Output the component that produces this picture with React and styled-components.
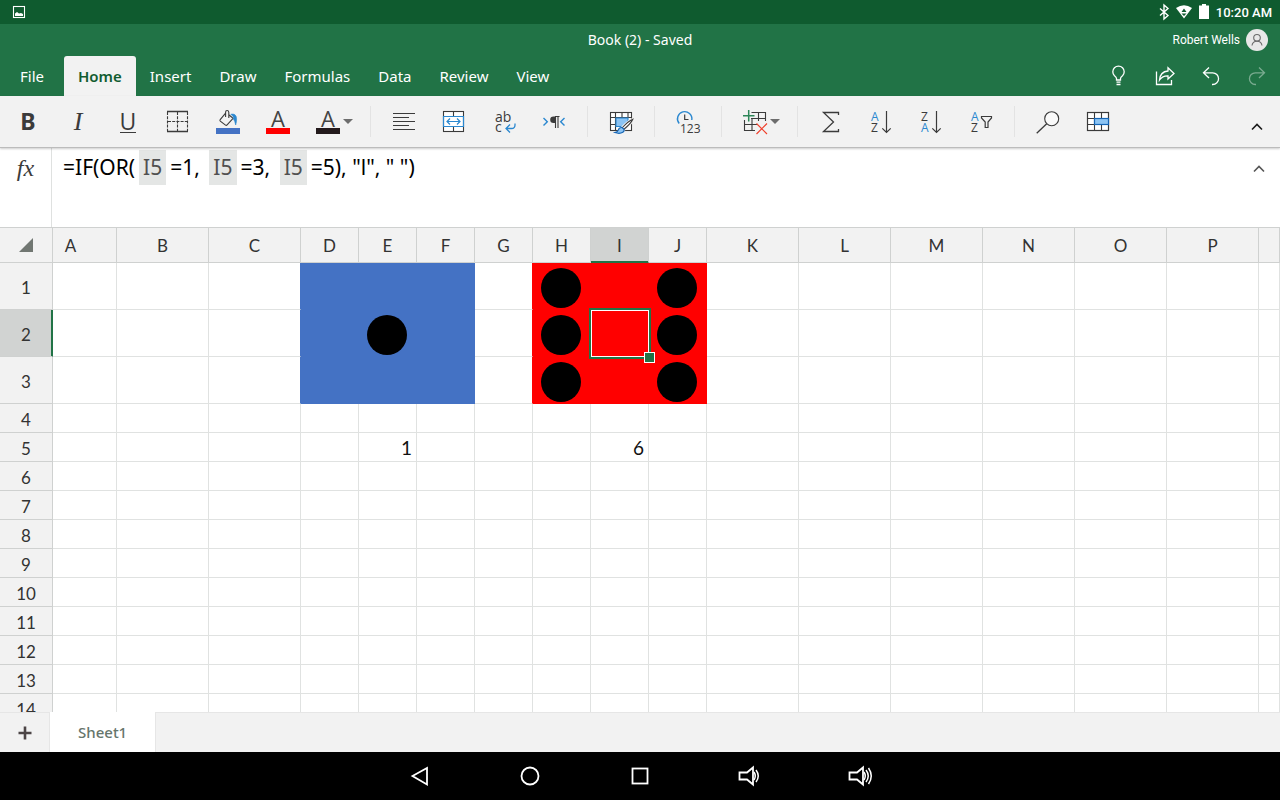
import React, { useState } from 'react'
import styled, { createGlobalStyle } from 'styled-components'

const GlobalStyle = createGlobalStyle`
  * { box-sizing: border-box; }
  body {
    margin: 0;
    background: #fff;
    font-family: "Noto Sans", "Open Sans", sans-serif;
  }
  button {
    border: 0;
    padding: 0;
    background: none;
    font: inherit;
    color: inherit;
    cursor: pointer;
  }
  svg { display: block; overflow: visible; }
`

const Screen = styled.div`
  display: flex;
  flex-direction: column;
  height: 100vh;
  overflow: hidden;
`

/* ---------- top bars ---------- */

const StatusBar = styled.div`
  display: flex;
  align-items: center;
  justify-content: space-between;
  flex: none;
  height: 24px;
  padding: 0 8px 0 12px;
  background: #0f5b2f;
  color: #fff;
`

const StatusIcons = styled.div`
  display: flex;
  align-items: center;
  gap: 7px;
  font: 500 13px Roboto, sans-serif;
`

const AppHeader = styled.header`
  flex: none;
  background: #217346;
  color: #fff;
`

const TitleRow = styled.div`
  display: grid;
  grid-template-columns: 1fr auto 1fr;
  align-items: center;
  height: 32px;
  padding: 0 12px;
`

const Title = styled.h1`
  grid-column: 2;
  margin: 0;
  font-size: 14px;
  font-weight: 400;
  line-height: 18px;
`

const Account = styled.button`
  display: flex;
  align-items: center;
  justify-self: end;
  gap: 6px;
  font-family: Roboto, sans-serif;
  font-size: 12px;
`

const Avatar = styled.span`
  display: grid;
  place-items: center;
  width: 22px;
  height: 22px;
  border-radius: 50%;
  background: #e8e8e8;
  color: #6b6b6b;
`

const TabRow = styled.div`
  display: flex;
  justify-content: space-between;
  height: 40px;
`

const Tabs = styled.nav`
  display: flex;
`

const FileButton = styled.button`
  width: 64px;
  font-size: 15px;
`

const Tab = styled.button`
  padding: 0 14px;
  border-radius: 3px 3px 0 0;
  font-size: 15px;
  font-weight: ${(p) => (p.$active ? 600 : 400)};
  background: ${(p) => (p.$active ? '#f2f2f2' : 'transparent')};
  color: ${(p) => (p.$active ? '#115c30' : '#fff')};
`

const HeaderButton = styled.button`
  display: inline-grid;
  place-items: center;
  width: 46px;
  height: 40px;
  opacity: ${(p) => (p.disabled ? 0.4 : 1)};
`

/* ---------- ribbon ---------- */

const Ribbon = styled.div`
  position: relative;
  display: flex;
  flex: none;
  height: 52px;
  padding-left: 3px;
  background: #f2f2f2;
  border-bottom: 1px solid #bcbcbc;
  box-shadow: 0 1px 2px rgba(0, 0, 0, 0.2);
  color: #3b3b3b;
`

const Tool = styled.button`
  display: flex;
  align-items: center;
  flex: none;
  width: ${(p) => (p.$wide ? 59 : 50)}px;
  height: 50px;
  padding-left: 12px;
`

const LetterTool = styled.button`
  flex: none;
  width: 50px;
  height: 50px;
  font-size: 23px;
  line-height: 50px;
  text-align: center;
`

const Bold = styled.b`
  font-weight: 700;
`

const Italic = styled.i`
  font-family: "Liberation Serif", serif;
  font-size: 26px;
`

const Underline = styled.span`
  display: inline-block;
  border-bottom: 1px solid #3b3b3b;
  font-family: "Open Sans", sans-serif;
  line-height: 22px;
`

const Divider = styled.span`
  flex: none;
  width: 1px;
  height: 31px;
  margin: 10px 8px 0;
  background: #e3e3e3;
`

const CollapseButton = styled.button`
  display: grid;
  place-items: center;
  width: 32px;
  height: ${(p) => p.$height}px;
  margin: 0 ${(p) => p.$edge}px 0 auto;
  color: ${(p) => p.$tone};
`

const Caret = styled.span`
  margin-left: 2px;
  border: 5px solid transparent;
  border-top-color: #6d6d6d;
  border-bottom: 0;
`

/* ---------- formula bar ---------- */

const FormulaBar = styled.div`
  display: flex;
  align-items: stretch;
  flex: none;
  height: 79px;
  padding-top: 2px;
  background: #fff;
`

const FxButton = styled.button`
  display: block;
  flex: none;
  width: 52px;
  margin-top: -2px;
  padding-bottom: 38px;
  border-right: 1px solid #dfe1e0;
  font: italic 24px "Liberation Serif", serif;
  color: #3b3b3b;
`

const Formula = styled.div`
  flex: 1;
  padding-left: 11px;
  font-size: 21px;
  line-height: 35px;
  color: #000;
  white-space: pre;
  outline: none;
`

const CellRef = styled.span`
  display: inline-block;
  margin: 0 4px;
  padding: 0 4px;
  background: #e4e6e5;
  color: #505050;
`

/* ---------- sheet ---------- */

const SheetArea = styled.main`
  flex: 1;
  min-height: 0;
  overflow: hidden;
  border-top: 1px solid #cfd1d0;
`

const Sheet = styled.table`
  width: 100%;
  table-layout: fixed;
  border-collapse: separate;
  border-spacing: 0;
  font-family: Lato, sans-serif;
`

const Corner = styled.th`
  height: 35px;
  padding: 0 19px 0 0;
  background: #f2f2f2;
  border-right: 1px solid #cfd1d0;
  border-bottom: 1px solid #cfd1d0;

  svg { margin-left: auto; }
`

const ColumnHead = styled.th`
  height: 35px;
  padding: 0 ${(p) => (p.$clipped ? 28 : 0)}px 0 0;
  border-right: 1px solid #cfd1d0;
  border-bottom: 1px solid ${(p) => (p.$selected ? '#217346' : '#cfd1d0')};
  box-shadow: ${(p) => (p.$selected ? 'inset 0 -1px #217346' : 'none')};
  background: ${(p) => (p.$selected ? '#d1d3d2' : '#f2f2f2')};
  color: #333;
  font-size: 17px;
  font-weight: 400;
`

const RowHead = styled.th`
  height: ${(p) => p.$height}px;
  padding: 2px 0 0;
  border-right: 1px solid ${(p) => (p.$selected ? '#217346' : '#cfd1d0')};
  border-bottom: 1px solid #cfd1d0;
  box-shadow: ${(p) => (p.$selected ? 'inset -1px 0 #217346' : 'none')};
  background: ${(p) => (p.$selected ? '#d1d3d2' : '#f2f2f2')};
  color: #333;
  font-size: 17px;
  font-weight: 400;
`

const Cell = styled.td`
  position: relative;
  padding: ${(p) => (p.$pip ? '4px 2px 0 0' : '2px 4px 0')};
  border-right: 1px solid ${(p) => p.$edge || '#e0e2e1'};
  border-bottom: 1px solid ${(p) => p.$fill || '#e0e2e1'};
  background: ${(p) => p.$fill || '#fff'};
  font-size: 19px;
  line-height: 20px;
  text-align: right;
  color: #111;
`

const Pip = styled.span`
  display: block;
  width: 40px;
  height: 40px;
  margin: 0 auto;
  border-radius: 50%;
  background: #000;
`

const Selection = styled.span`
  position: absolute;
  inset: 0 -1px -1px 0;
  border: 1px solid #fff;
  box-shadow: 0 0 0 2px #217346;
  z-index: 1;
`

const FillHandle = styled.span`
  position: absolute;
  right: -7px;
  bottom: -7px;
  width: 11px;
  height: 11px;
  border: 1px solid #fff;
  background: #217346;
`

/* ---------- bottom bars ---------- */

const SheetTabs = styled.div`
  display: flex;
  flex: none;
  height: 40px;
  background: #f2f2f2;
`

const AddSheet = styled.button`
  display: grid;
  place-items: center;
  width: 50px;
  border-top: 1px solid #e6e6e6;
  border-right: 1px solid #e6e6e6;
  color: #4c4546;
`

const SheetTab = styled.button`
  padding: 0 28px;
  background: #fff;
  color: #66756c;
  font-size: 15px;
  font-weight: 500;
`

const SheetTabsRest = styled.div`
  flex: 1;
  border-top: 1px solid #e6e6e6;
  border-left: 1px solid #e6e6e6;
`

const SystemNav = styled.nav`
  display: flex;
  justify-content: center;
  flex: none;
  height: 48px;
  background: #000;
  color: #fff;
`

const NavButton = styled.button`
  display: grid;
  place-items: center;
  width: 110px;
`

/* ---------- icons ---------- */

const blue = '#2b88d0'
const iconFont = 'Open Sans, sans-serif'

const Icon = ({ size = 26, children, ...rest }) => (
  <svg width={size} height={size} viewBox={`0 0 ${size} ${size}`} fill="none" stroke="currentColor" strokeWidth="1.1" aria-hidden="true" {...rest}>
    {children}
  </svg>
)

const Glyph = ({ x, y, size = 12, fill = '#3b3b3b', children }) => (
  <text x={x} y={y} fontSize={size} fontFamily={iconFont} fill={fill} stroke="none">{children}</text>
)

const BordersIcon = () => (
  <Icon>
    <path d="M2 3.5H23M2 23.5H23" strokeWidth="1.3" />
    <path d="M2.5 4V23M22.5 4V23M12.5 4V23M3 13.5H23" strokeDasharray="3 1.2" />
  </Icon>
)

const FillIcon = () => (
  <Icon>
    <path d="M10.6 5.2 5.2 11.6q-.6.8.1 1.5l5.2 4q.9.6 1.6-.2l6-6.6-4-3.3M10.6 9V4.2q0-1.7 1.5-1.7T13.8 4.2V10" />
    <path d="M15.8 6.2q5.6-1 5.8 4.6 0 3-.9 6.2-.8-4.4-2.3-5.9 .8-2.600-2.600-4.900Z" fill={blue} stroke={blue} strokeWidth=".6" />
    <rect x="1" y="20" width="24" height="6" fill="#4472c4" stroke="none" />
  </Icon>
)

const FontColorIcon = ({ color }) => (
  <Icon>
    <text x="13" y="19" fontSize="22" fontFamily={iconFont} fill="#444" stroke="none" textAnchor="middle">A</text>
    <rect x="1" y="20" width="24" height="6" fill={color} stroke="none" />
  </Icon>
)

const AlignIcon = () => (
  <Icon><path d="M2 5.5H24M2 9.5H18M2 13.5H24M2 17.5H18M2 21.5H24" /></Icon>
)

const MergeIcon = () => (
  <Icon>
    <rect x="2.5" y="3.5" width="20" height="20" fill="#fff" />
    <path d="M12.5 3.5V8M12.5 19V23.5" />
    <path d="M2.5 8.5H22.5V18.5H2.5ZM6 13.5H19M9 10.5 6 13.5 9 16.5M16 10.5 19 13.5 16 16.5" stroke={blue} strokeWidth="1.2" />
  </Icon>
)

const WrapIcon = () => (
  <Icon>
    <Glyph x={4} y={14} size={14}>ab</Glyph>
    <Glyph x={4} y={24} size={14}>c</Glyph>
    <path d="M24 15.5V17Q24 20.5 20.5 20.5H15M19 16.5 15 20.5 19 24.5" stroke={blue} strokeWidth="1.3" />
  </Icon>
)

const DirectionIcon = () => (
  <Icon>
    <path d="M2.5 10 6.3 13.7 2.5 17.5M23.5 10 19.7 13.7 23.5 17.5" stroke={blue} strokeWidth="1.4" />
    <path d="M14 8.5H18.5M14.5 8.5V20M17 8.5V20" strokeWidth="1.1" />
    <path d="M14.5 8.5H12.5a3.3 3.3 0 0 0 0 6.6h2Z" fill="currentColor" stroke="none" />
  </Icon>
)

const CellStylesIcon = () => (
  <Icon>
    <rect x="2.5" y="4.5" width="21" height="18" fill="#fff" />
    <path d="M7.5 4.5V22.5M2.5 9.5H23.5M14 4.5V9.5M20 4.5V9.5M2.5 16.5H7.5" />
    <rect x="8" y="10" width="12" height="8.5" fill="#8cc4f3" stroke={blue} />
    <path d="M24.8 11.3Q20.5 13 14 20l1.7 1.5Q23 15.5 24.8 11.3Z" fill="#fff" stroke="#f2f2f2" strokeWidth="3" />
    <path d="M24.8 11.3Q20.5 13 14 20l1.7 1.5Q23 15.5 24.8 11.3Z" fill="#fff" />
    <path d="M14 19.5q-3-.2-3.6 2.3-.5 2-3.6 2.8 5 1.6 8-.3 2-1.3 1-3.3Z" fill="#8cc4f3" stroke="#1565b5" />
  </Icon>
)

const NumberFormatIcon = () => (
  <Icon>
    <path d="M4.2 15.5A7.2 7.2 0 1 1 16.8 12" stroke={blue} strokeWidth="1.4" />
    <path d="M9.7 6.5V11.5H13.5" strokeWidth="1.2" />
    <Glyph x={5} y={25}>123</Glyph>
  </Icon>
)

const InsertDeleteIcon = () => (
  <Icon>
    <path d="M9.5 4.5H23.5V13M9 10.5H23.5M16.5 4.5V13M10 10V23M2.5 12V22.5H13M2.5 16.5H15" />
    <path d="M6.7 2V13.5M1 7.7H12.5" stroke="#2c8658" strokeWidth="1.5" />
    <path d="M14.5 15.5 25 26M25 15.5 14.5 26" stroke="#f0402c" strokeWidth="1.2" />
  </Icon>
)

const SumIcon = () => (
  <Icon><path d="M20.5 7V4.5H5.5L15.5 14 5.5 23.5H20.5V21" strokeWidth="1.3" /></Icon>
)

const SortIcon = ({ descending }) => (
  <Icon>
    <Glyph x={3} y={13} fill={descending ? undefined : blue}>{descending ? 'Z' : 'A'}</Glyph>
    <Glyph x={3} y={24} fill={descending ? blue : undefined}>{descending ? 'A' : 'Z'}</Glyph>
    <path d="M18.5 3V24.5M14.3 20.3 18.5 24.5 22.7 20.3" strokeWidth="1.2" />
  </Icon>
)

const SortFilterIcon = () => (
  <Icon>
    <Glyph x={3} y={13} fill={blue}>A</Glyph>
    <Glyph x={3} y={24}>Z</Glyph>
    <path d="M13.5 8.5H23.5V10L20 14V19.5H17.2V14L13.5 10Z" strokeWidth="1.2" />
  </Icon>
)

const FindIcon = () => (
  <Icon>
    <circle cx="16.7" cy="10.7" r="7" fill="#fafafa" />
    <path d="M11.7 15.7 1.7 25.3" strokeWidth="1.3" />
  </Icon>
)

const TableIcon = () => (
  <Icon>
    <rect x="2.5" y="4.5" width="21" height="18" fill="#fff" strokeWidth="1.2" />
    <path d="M9.5 4.5V22.5M16.5 4.5V22.5M2.5 10.5H23.5M2.5 16.5H23.5" />
    <rect x="9.5" y="10.5" width="14" height="6" fill="#8cc4f3" stroke="#1565b5" strokeWidth="1.2" />
  </Icon>
)

const ChevronUp = () => (
  <Icon size={12}><path d="M1 8.5 6 3.5 11 8.5" strokeWidth="1.6" /></Icon>
)

const PictureIcon = () => (
  <Icon size={14}>
    <rect x="1.5" y="1.5" width="11" height="11" />
    <path d="M3 11V8.5L5 7 7 8.5 9 8 11 9V11Z" fill="currentColor" stroke="none" />
  </Icon>
)

const BluetoothIcon = () => (
  <Icon size={10} viewBox="0 0 10 16" height="16">
    <path d="M1 4.5 9 11.5 5 15V1L9 4.5 1 11.5" strokeWidth="1.4" />
  </Icon>
)

const WifiIcon = () => (
  <Icon size={16}>
    <path d="M0 4Q8-1.5 16 4L8 14.5Z" fill="currentColor" stroke="none" />
    <path d="M8 4.5 5.5 8H10.5ZM5.5 9.5H10.5L8 12Z" fill="#0f5b2f" stroke="none" />
  </Icon>
)

const BatteryIcon = () => (
  <Icon size={10} viewBox="0 0 10 16" height="16">
    <path d="M3 0H7V1.5H10V15H0V1.5H3Z" fill="currentColor" stroke="none" />
  </Icon>
)

const PersonIcon = () => (
  <Icon size={14}>
    <circle cx="7" cy="4.8" r="3.3" />
    <path d="M2 12.5Q2.5 8.2 7 8.2T12 12.5" />
  </Icon>
)

const BulbIcon = () => (
  <Icon size={20}>
    <path d="M7.5 14V12.5Q7.5 11.3 5.5 9.8A5.7 5.7 0 1 1 13.5 9.8Q11.5 11.3 11.5 12.5V14ZM7.5 16.2H11.5M7.5 18.5H11.5" strokeWidth="1.3" />
  </Icon>
)

const ShareIcon = () => (
  <Icon size={20}>
    <path d="M1.5 5.5V18.5H16.5V14" strokeWidth="1.3" />
    <path d="M13 1.8 19 7.5 13 13V9.8Q7.5 9.6 4.5 14 5.2 5.6 13 5Z" strokeWidth="1.3" />
  </Icon>
)

const UndoIcon = ({ flip }) => (
  <Icon size={20}>
    <path transform={flip ? 'matrix(-1 0 0 1 20 0)' : undefined} d="M8 1.5 2.5 6.8 8 12M2.5 6.8H11.7A5.8 5.8 0 0 1 11.7 18.5H11" strokeWidth="1.3" />
  </Icon>
)

const SpeakerIcon = ({ loud }) => (
  <Icon size={24} strokeWidth="1.8">
    <path d="M1.5 8.5H9L15 3.5V20.5L9 15.5H1.5Z" />
    <path d="M16 8Q18.5 12 16 16M18 6Q22.500 12 18 18" strokeWidth="1.5" />
    {loud && <path d="M20.5 4Q26 12 20.5 20" strokeWidth="1.5" />}
  </Icon>
)

/* ---------- data ---------- */

const tabs = ['Home', 'Insert', 'Draw', 'Formulas', 'Data', 'Review', 'View']

const columns = [
  ['A', 64], ['B', 92], ['C', 92], ['D', 58], ['E', 58], ['F', 58], ['G', 58], ['H', 58],
  ['I', 58], ['J', 58], ['K', 92], ['L', 92], ['M', 92], ['N', 92], ['O', 92], ['P', 92],
]

const rows = Array.from({ length: 14 }, (_, i) => ({ number: i + 1, height: i < 3 ? 47 : 29 }))

const values = { E5: 1, I5: 6 }
const pips = ['E2', 'H1', 'H2', 'H3', 'J1', 'J2', 'J3']
const selected = { column: 'I', row: 2 }

const fillOf = (column, row) => {
  if (row > 3) return undefined
  if ('DEF'.includes(column)) return '#4472c4'
  if ('HIJ'.includes(column)) return '#ff0000'
  return undefined
}

// a fill also covers the grid line on its left side
const edgeOf = (index, row) => {
  const next = columns[index + 1]
  return fillOf(columns[index][0], row) || (next && fillOf(next[0], row))
}

function SheetGrid() {
  return (
    <Sheet>
      <colgroup>
        <col width="53" />
        {columns.map(([name, width]) => <col key={name} width={width} />)}
        <col />
      </colgroup>
      <thead>
        <tr>
          <Corner aria-label="Select all">
            <Icon size={14}><path d="M14 0V14H0Z" fill="#717772" stroke="none" /></Icon>
          </Corner>
          {columns.map(([name], i) => (
            <ColumnHead key={name} scope="col" $clipped={i === 0} $selected={name === selected.column}>{name}</ColumnHead>
          ))}
          <ColumnHead aria-hidden="true" />
        </tr>
      </thead>
      <tbody>
        {rows.map(({ number, height }) => (
          <tr key={number}>
            <RowHead scope="row" $height={height} $selected={number === selected.row}>{number}</RowHead>
            {columns.map(([name], i) => {
              const id = name + number
              const pip = pips.includes(id)
              return (
                <Cell key={id} $pip={pip} $fill={fillOf(name, number)} $edge={edgeOf(i, number)}>
                  {pip && <Pip />}
                  {values[id]}
                  {name === selected.column && number === selected.row && <Selection><FillHandle /></Selection>}
                </Cell>
              )
            })}
            <Cell />
          </tr>
        ))}
      </tbody>
    </Sheet>
  )
}

function App() {
  const [tab, setTab] = useState('Home')

  return (
    <Screen>
      <GlobalStyle />
      <StatusBar>
        <PictureIcon />
        <StatusIcons>
          <BluetoothIcon />
          <WifiIcon />
          <BatteryIcon />
          <span>10:20 AM</span>
        </StatusIcons>
      </StatusBar>

      <AppHeader>
        <TitleRow>
          <Title>Book (2) - Saved</Title>
          <Account>
            Robert Wells
            <Avatar><PersonIcon /></Avatar>
          </Account>
        </TitleRow>
        <TabRow>
          <Tabs>
            <FileButton>File</FileButton>
            {tabs.map((name) => (
              <Tab key={name} $active={name === tab} onClick={() => setTab(name)}>{name}</Tab>
            ))}
          </Tabs>
          <div>
            <HeaderButton aria-label="Tell me"><BulbIcon /></HeaderButton>
            <HeaderButton aria-label="Share"><ShareIcon /></HeaderButton>
            <HeaderButton aria-label="Undo"><UndoIcon /></HeaderButton>
            <HeaderButton aria-label="Redo" disabled><UndoIcon flip /></HeaderButton>
          </div>
        </TabRow>
      </AppHeader>

      <Ribbon role="toolbar">
        <LetterTool aria-label="Bold"><Bold>B</Bold></LetterTool>
        <LetterTool aria-label="Italic"><Italic>I</Italic></LetterTool>
        <LetterTool aria-label="Underline"><Underline>U</Underline></LetterTool>
        <Tool aria-label="Borders"><BordersIcon /></Tool>
        <Tool aria-label="Fill color"><FillIcon /></Tool>
        <Tool aria-label="Font color"><FontColorIcon color="#ff0000" /></Tool>
        <Tool aria-label="More font options" $wide><FontColorIcon color="#231a1c" /><Caret /></Tool>
        <Divider />
        <Tool aria-label="Alignment"><AlignIcon /></Tool>
        <Tool aria-label="Merge cells"><MergeIcon /></Tool>
        <Tool aria-label="Wrap text"><WrapIcon /></Tool>
        <Tool aria-label="Text direction"><DirectionIcon /></Tool>
        <Divider />
        <Tool aria-label="Cell styles"><CellStylesIcon /></Tool>
        <Divider />
        <Tool aria-label="Number format"><NumberFormatIcon /></Tool>
        <Divider />
        <Tool aria-label="Insert and delete cells" $wide><InsertDeleteIcon /><Caret /></Tool>
        <Divider />
        <Tool aria-label="AutoSum"><SumIcon /></Tool>
        <Tool aria-label="Sort ascending"><SortIcon /></Tool>
        <Tool aria-label="Sort descending"><SortIcon descending /></Tool>
        <Tool aria-label="Sort and filter"><SortFilterIcon /></Tool>
        <Divider />
        <Tool aria-label="Find"><FindIcon /></Tool>
        <Tool aria-label="Format as table"><TableIcon /></Tool>
        <CollapseButton aria-label="Collapse ribbon" $height={62} $edge={7} $tone="#1c1c1c"><ChevronUp /></CollapseButton>
      </Ribbon>

      <FormulaBar>
        <FxButton aria-label="Insert function">fx</FxButton>
        <Formula role="textbox" aria-label="Formula" contentEditable suppressContentEditableWarning spellCheck={false}>
          =IF(OR(<CellRef>I5</CellRef>=1, <CellRef>I5</CellRef>=3, <CellRef>I5</CellRef>=5), "l", " ")
        </Formula>
        <CollapseButton aria-label="Collapse formula bar" $height={38} $edge={5} $tone="#555"><ChevronUp /></CollapseButton>
      </FormulaBar>

      <SheetArea>
        <SheetGrid />
      </SheetArea>

      <SheetTabs>
        <AddSheet aria-label="Add sheet">
          <Icon size={14}><path d="M7 .5V13.5M.5 7H13.5" strokeWidth="2.6" /></Icon>
        </AddSheet>
        <SheetTab>Sheet1</SheetTab>
        <SheetTabsRest />
      </SheetTabs>

      <SystemNav>
        <NavButton aria-label="Back"><Icon size={24} strokeWidth="1.8"><path d="M4.5 12 19 4V20.5Z" /></Icon></NavButton>
        <NavButton aria-label="Home screen"><Icon size={24} strokeWidth="1.8"><circle cx="12" cy="12" r="8.5" /></Icon></NavButton>
        <NavButton aria-label="Recent apps"><Icon size={24} strokeWidth="1.8"><rect x="4.5" y="4.5" width="15" height="15" /></Icon></NavButton>
        <NavButton aria-label="Volume down"><SpeakerIcon /></NavButton>
        <NavButton aria-label="Volume up"><SpeakerIcon loud /></NavButton>
      </SystemNav>
    </Screen>
  )
}

export default App
